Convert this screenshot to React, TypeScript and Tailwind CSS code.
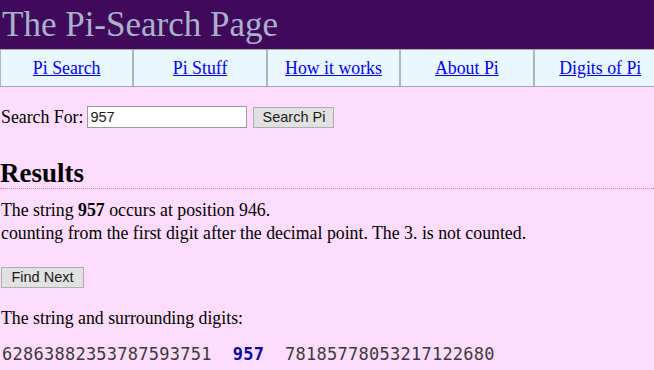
const navItems = ['Pi Search', 'Pi Stuff', 'How it works', 'About Pi', 'Digits of Pi'];

function NavBar() {
  return (
    <nav className="flex w-[670px] border-y border-[#a8a8a8] bg-[#e9f7fe]">
      {navItems.map((item) => (
        <div
          key={item}
          className="flex h-[36px] w-[133.4px] shrink-0 items-center justify-center border-x border-[#b4b4b4] leading-[36px]"
        >
          <a href="#" className="whitespace-nowrap text-[#0000ee] underline">
            {item}
          </a>
        </div>
      ))}
    </nav>
  );
}

function GreyButton({ label, className = '' }: { label: string; className?: string }) {
  return (
    <button
      type="button"
      className={`block h-[21px] whitespace-nowrap border border-[#adadad] bg-[#e1e1e1] text-center text-[14.5px] leading-[19px] text-[#1a1a1a] ${className}`}
      style={{ fontFamily: '"Liberation Sans", Arial, sans-serif' }}
    >
      {label}
    </button>
  );
}

export default function App() {
  return (
    <div
      className="min-h-screen w-[654px] overflow-hidden bg-[#fedcfe] text-[17.8px] text-black"
      style={{ fontFamily: '"Liberation Serif", "Times New Roman", serif' }}
    >
      <header className="h-[49px] bg-[#400a5a]">
        <h1 className="pl-[2px] text-[35px] leading-[49px] text-[#a9b1cd]">The Pi-Search Page</h1>
      </header>

      <NavBar />

      <form className="mt-[19px] flex h-[22px] items-center pl-[1px]" onSubmit={(e) => e.preventDefault()}>
        <span className="leading-[20px]">Search For:</span>
        <input
          type="text"
          defaultValue="957"
          className="ml-[4px] h-[22px] w-[160px] border border-[#999999] bg-white px-[2px] text-[14.5px] text-[#1a1a1a] outline-none"
          style={{ fontFamily: '"Liberation Sans", Arial, sans-serif' }}
        />
        <GreyButton label="Search Pi" className="ml-[6px] w-[81px]" />
      </form>

      <h2 className="mt-[31px] border-b border-dotted border-[#ff6f9a] text-[27px] font-bold leading-[29px]">
        Results
      </h2>

      <p className="mt-[10px] pl-[1px] leading-[23px]">
        The string <b>957</b> occurs at position 946.
        <br />
        counting from the first digit after the decimal point. The 3. is not counted.
      </p>

      <GreyButton label="Find Next" className="ml-[1px] mt-[22px] w-[83px]" />

      <p className="mt-[19px] pl-[1px] leading-[23px]">The string and surrounding digits:</p>

      <p
        className="mt-[14px] whitespace-pre pl-[2px] text-[17px] leading-[20px] tracking-[0.25px] text-[#3a3a3a]"
        style={{ fontFamily: '"DejaVu Sans Mono", monospace' }}
      >
        62863882353787593751  <b className="text-[#0a0aa0]">957</b>  78185778053217122680
      </p>
    </div>
  );
}
